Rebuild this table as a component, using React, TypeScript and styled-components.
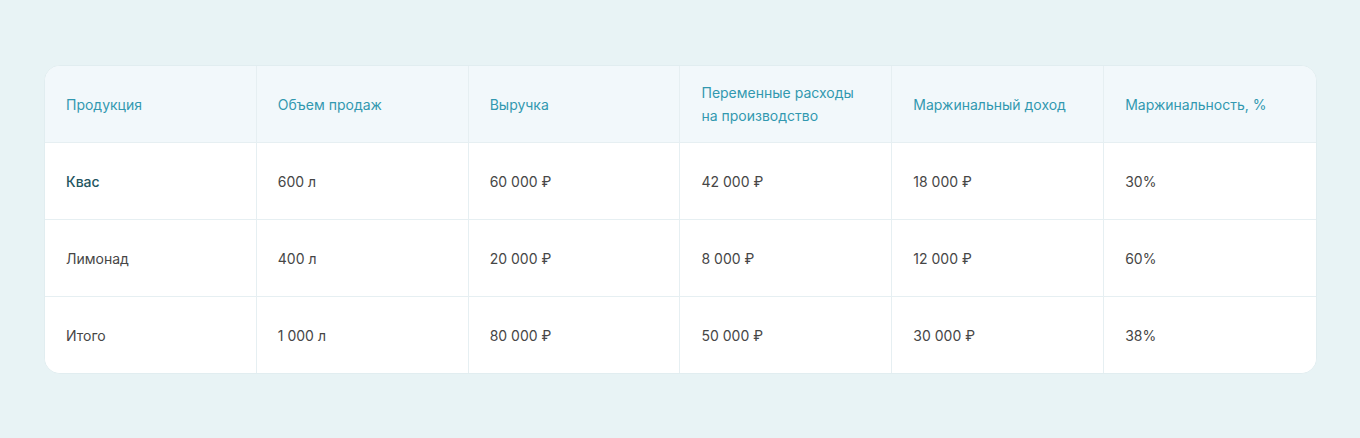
import React from 'react';
import styled, { createGlobalStyle } from 'styled-components';

const GlobalStyle = createGlobalStyle`
    body {
        margin: 0;
        background: #e8f3f5;
        font-family: Inter, "Noto Sans", sans-serif;
    }
`;

const Page = styled.div`
    padding: 65px 43px 65px 44px;
`;

const Card = styled.div`
    display: grid;
    grid-template-columns: repeat(6, 1fr);
    background: #ffffff;
    border: 1px solid #e1edf0;
    border-radius: 16px;
    overflow: hidden;
`;

const Cell = styled.div<{ $head?: boolean; $last?: boolean; $lastRow?: boolean; $accent?: boolean }>`
    display: flex;
    align-items: center;
    height: 76px;
    padding: 0 20px 0 21px;
    font-size: 14px;
    line-height: 23px;
    background: ${(p) => (p.$head ? '#f2f8fb' : '#ffffff')};
    color: ${(p) => (p.$head ? '#3298b0' : p.$accent ? '#235560' : '#464646')};
    font-weight: ${(p) => (p.$accent ? 500 : 400)};
    border-right: ${(p) => (p.$last ? 'none' : '1px solid #e6eff2')};
    border-bottom: ${(p) => (p.$lastRow ? 'none' : '1px solid #e6eff2')};
`;

const headers = [
    'Продукция',
    'Объем продаж',
    'Выручка',
    <>Переменные расходы<br />на производство</>,
    'Маржинальный доход',
    'Маржинальность, %',
];

const rows = [
    ['Квас', '600 л', '60 000 ₽', '42 000 ₽', '18 000 ₽', '30%'],
    ['Лимонад', '400 л', '20 000 ₽', '8 000 ₽', '12 000 ₽', '60%'],
    ['Итого', '1 000 л', '80 000 ₽', '50 000 ₽', '30 000 ₽', '38%'],
];

export default function App() {
    return (
        <>
            <GlobalStyle />
            <Page>
                <Card>
                    {headers.map((h, i) => (
                        <Cell key={'h' + i} $head $last={i === 5}>
                            <span>{h}</span>
                        </Cell>
                    ))}
                    {rows.map((row, r) =>
                        row.map((v, i) => (
                            <Cell
                                key={r + '-' + i}
                                $last={i === 5}
                                $lastRow={r === rows.length - 1}
                                $accent={r === 0 && i === 0}
                            >
                                {v}
                            </Cell>
                        ))
                    )}
                </Card>
            </Page>
        </>
    );
}
